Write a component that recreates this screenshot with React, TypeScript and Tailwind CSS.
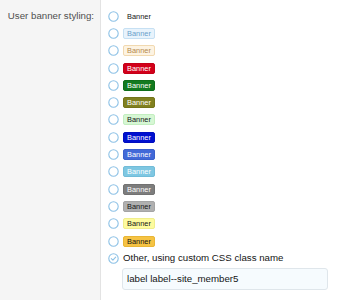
import React from "react";

type B = { cls: string };

const banners: B[] = [
  { cls: "text-[#141414] border-transparent bg-transparent" },
  { cls: "bg-[#e8f3fc] border-[#c6e0f3] text-[#6a9fcb]" },
  { cls: "bg-[#fdf3e2] border-[#f1d9b0] text-[#b4884c]" },
  { cls: "bg-[#d2001a] border-[#c40018] text-white" },
  { cls: "bg-[#127a1f] border-[#0f6e1a] text-white" },
  { cls: "bg-[#80801f] border-[#74741a] text-white" },
  { cls: "bg-[#d6f7d4] border-[#c3eec0] text-[#141414]" },
  { cls: "bg-[#0010cf] border-[#000ec0] text-white" },
  { cls: "bg-[#4169d8] border-[#3a60cc] text-white" },
  { cls: "bg-[#7ec7e2] border-[#72bcd8] text-white" },
  { cls: "bg-[#7d7d7d] border-[#727272] text-white" },
  { cls: "bg-[#b0b0b0] border-[#a4a4a4] text-[#141414]" },
  { cls: "bg-[#fdfb9e] border-[#f0ee8c] text-[#141414]" },
  { cls: "bg-[#f6c343] border-[#e9b636] text-[#141414]" },
];

function Radio({ checked }: { checked?: boolean }) {
  return (
    <svg width="11" height="11" viewBox="0 0 11 11" className="shrink-0">
      <circle cx="5.5" cy="5.5" r="4.7" fill="white" stroke="#8ec2e6" strokeWidth="1.1" />
      {checked && (
        <path d="M3.3 5.6 L4.9 7.1 L7.7 4.1" fill="none" stroke="#8ec2e6" strokeWidth="1.1" strokeLinecap="round" strokeLinejoin="round" />
      )}
    </svg>
  );
}

export default function App() {
  return (
    <div
      className="flex w-[340px] h-[300px] bg-white text-[9.7px]"
      style={{ fontFamily: '"Liberation Sans", Arial, sans-serif' }}
    >
      <div className="w-[101px] shrink-0 bg-[#f5f5f5] border-r border-[#e3e3e3] pt-[10px] pr-[6px] text-right text-[#4f4f4f] leading-[12px]">
        User banner styling:
      </div>
      <div className="flex flex-col pt-[7.5px] pl-[7px]">
        {banners.map((b, i) => (
          <div key={i} className="flex items-center h-[17.3px] gap-[4px]">
            <Radio />
            <span
              className={`inline-flex items-center justify-center w-[32px] h-[11px] rounded-[2px] border text-[7.4px] leading-[9px] ${b.cls}`}
            >
              Banner
            </span>
          </div>
        ))}
        <div className="flex items-center h-[17.3px] gap-[4px] text-[#141414]">
          <Radio checked />
          <span className="leading-[12px]">Other, using custom CSS class name</span>
        </div>
        <div className="mt-[1px] ml-[14px] w-[206px] h-[22px] rounded-[3px] border border-[#dfe6eb] bg-[#f6fbfe] flex items-center pl-[4px] text-[#141414]">
          label label--site_member5
        </div>
      </div>
    </div>
  );
}
